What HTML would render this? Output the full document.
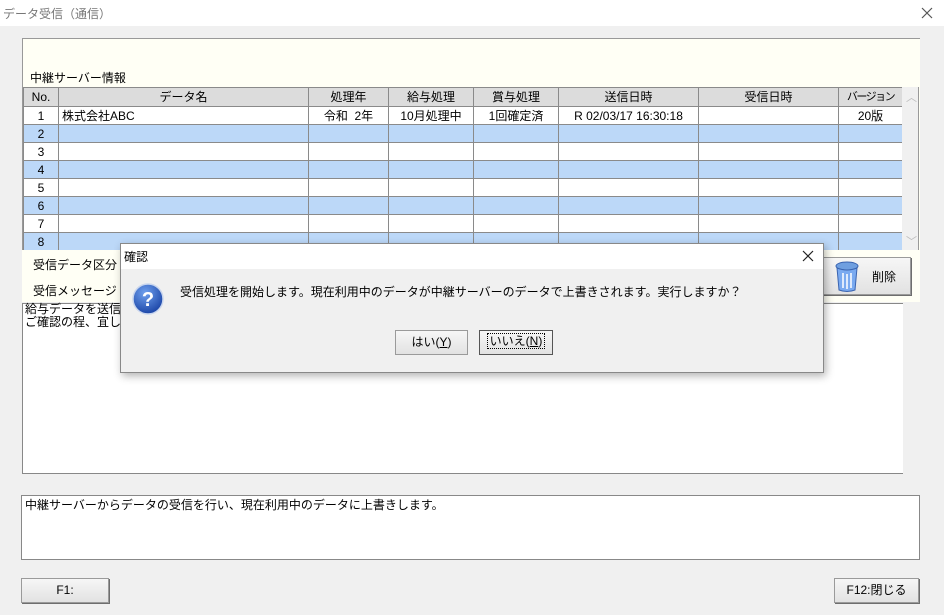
<!DOCTYPE html>
<html><head><meta charset="utf-8"><style>
*{margin:0;padding:0;box-sizing:border-box}
body{width:944px;height:615px;background:#f0f0f0;position:relative;overflow:hidden;font-family:"Liberation Sans","Noto Sans CJK JP",sans-serif;font-size:12px;color:#000}
.a{position:absolute;white-space:nowrap}
table{border-collapse:collapse;position:absolute;left:23px;top:87px;table-layout:fixed}
td{border:1px solid #8a8a8a;height:18px;font-size:12px;line-height:16px;padding:0 3px;overflow:hidden;white-space:nowrap;background:#fff}
tr.h td{background:#dcdcdc;text-align:center;height:19px}
tr.b td{background:#bcd8f8}
.c{text-align:center}
.btn{position:absolute;background:linear-gradient(#f6f6f6,#e2e2e2);border:1px solid #9a9a9a;box-shadow:1px 1px 0 #6e6e6e;text-align:center}
</style></head><body>
<div class="a" style="left:0;top:0;width:944px;height:26px;background:#fff"></div>
<div class="a" style="left:3px;top:5px;color:#777">データ受信（通信）</div>
<svg class="a" style="left:921px;top:7px" width="12" height="12"><path d="M1 1L11 11M11 1L1 11" stroke="#555" stroke-width="1.2"/></svg>

<div class="a" style="left:22px;top:38px;width:898px;height:212px;background:#fffff5;border-top:1px solid #999;border-left:1px solid #999"></div>
<div class="a" style="left:30px;top:69px">中継サーバー情報</div>
<table>
<colgroup><col style="width:35px"><col style="width:250px"><col style="width:80px"><col style="width:85px"><col style="width:85px"><col style="width:140px"><col style="width:140px"><col style="width:64px"></colgroup>
<tr class="h"><td>No.</td><td>データ名</td><td>処理年</td><td>給与処理</td><td>賞与処理</td><td>送信日時</td><td>受信日時</td><td style="padding:0;letter-spacing:-1.5px;font-size:11px">バージョン</td></tr>
<tr><td class="c">1</td><td>株式会社ABC</td><td class="c">令和&nbsp; 2年</td><td class="c">10月処理中</td><td class="c">1回確定済</td><td class="c">R 02/03/17 16:30:18</td><td></td><td class="c">20版</td></tr>
<tr class="b"><td class="c">2</td><td></td><td></td><td></td><td></td><td></td><td></td><td></td></tr>
<tr><td class="c">3</td><td></td><td></td><td></td><td></td><td></td><td></td><td></td></tr>
<tr class="b"><td class="c">4</td><td></td><td></td><td></td><td></td><td></td><td></td><td></td></tr>
<tr><td class="c">5</td><td></td><td></td><td></td><td></td><td></td><td></td><td></td></tr>
<tr class="b"><td class="c">6</td><td></td><td></td><td></td><td></td><td></td><td></td><td></td></tr>
<tr><td class="c">7</td><td></td><td></td><td></td><td></td><td></td><td></td><td></td></tr>
<tr class="b"><td class="c">8</td><td></td><td></td><td></td><td></td><td></td><td></td><td></td></tr>
</table>
<div class="a" style="left:902px;top:87px;width:17px;height:163px;background:#f0f0f0;border-right:1px solid #999"></div>
<div class="a" style="left:906px;top:89px;color:#bbb;font-size:11px">︿</div>
<div class="a" style="left:906px;top:233px;color:#bbb;font-size:11px">﹀</div>
<div class="a" style="left:22px;top:250px;width:898px;height:52px;background:#fffff5"></div>
<div class="a" style="left:33px;top:256px">受信データ区分</div>
<div class="a" style="left:33px;top:282px">受信メッセージ</div>
<div class="btn" style="left:822px;top:257px;width:89px;height:38px"></div>
<svg class="a" style="left:834px;top:261px" width="26" height="32"><ellipse cx="13" cy="5" rx="11" ry="4" fill="#6f9fe0" stroke="#3a64b0"/><path d="M3 7L5 29Q13 32 21 29L23 7Q13 11 3 7Z" fill="#7aaaf0" stroke="#3a64b0"/><path d="M9 12V27M13 13V28M17 12V27" stroke="#fff" stroke-width="1.5"/></svg>
<div class="a" style="left:872px;top:268px">削除</div>
<div class="a" style="left:22px;top:303px;width:882px;height:171px;background:#fff;border:1px solid #888"></div>
<div class="a" style="left:903px;top:303px;width:16px;height:171px;background:#f0f0f0"></div>
<div class="a" style="left:25px;top:303px;line-height:13px">給与データを送信<br>ご確認の程、宜し</div>
<div class="a" style="left:21px;top:495px;width:899px;height:65px;background:#fff;border:1px solid #888"></div>
<div class="a" style="left:25px;top:496px">中継サーバーからデータの受信を行い、現在利用中のデータに上書きします。</div>
<div class="btn" style="left:21px;top:578px;width:88px;height:25px;line-height:23px">F1:</div>
<div class="btn" style="left:834px;top:578px;width:85px;height:25px;line-height:23px">F12:閉じる</div>

<div class="a" style="left:120px;top:243px;width:704px;height:130px;background:#f0f0f0;border:1px solid #888;box-shadow:2px 3px 8px rgba(0,0,0,.3)"></div>
<div class="a" style="left:121px;top:244px;width:702px;height:25px;background:#fff"></div>
<div class="a" style="left:124px;top:248px">確認</div>
<svg class="a" style="left:802px;top:250px" width="12" height="12"><path d="M1 1L11 11M11 1L1 11" stroke="#222" stroke-width="1.2"/></svg>
<svg class="a" style="left:132px;top:283px" width="34" height="34"><defs><radialGradient id="g" cx="40%" cy="30%" r="70%"><stop offset="0" stop-color="#6fa0ee"/><stop offset="1" stop-color="#1d47a8"/></radialGradient></defs><circle cx="16" cy="16" r="15" fill="url(#g)" stroke="#c9d6ee" stroke-width="1.5"/><text x="16" y="23" font-size="20" font-weight="bold" fill="#fff" text-anchor="middle" font-family="Liberation Sans">?</text></svg>
<div class="a" style="left:180px;top:283px">受信処理を開始します。現在利用中のデータが中継サーバーのデータで上書きされます。実行しますか？</div>
<div class="btn" style="left:395px;top:330px;width:73px;height:25px;line-height:23px;box-shadow:none">はい(<u>Y</u>)</div>
<div class="btn" style="left:479px;top:330px;width:74px;height:25px;line-height:21px;border:1px solid #555;box-shadow:none"><span style="outline:1px dotted #000;padding:0 2px">いいえ(<u>N</u>)</span></div>
</body></html>
